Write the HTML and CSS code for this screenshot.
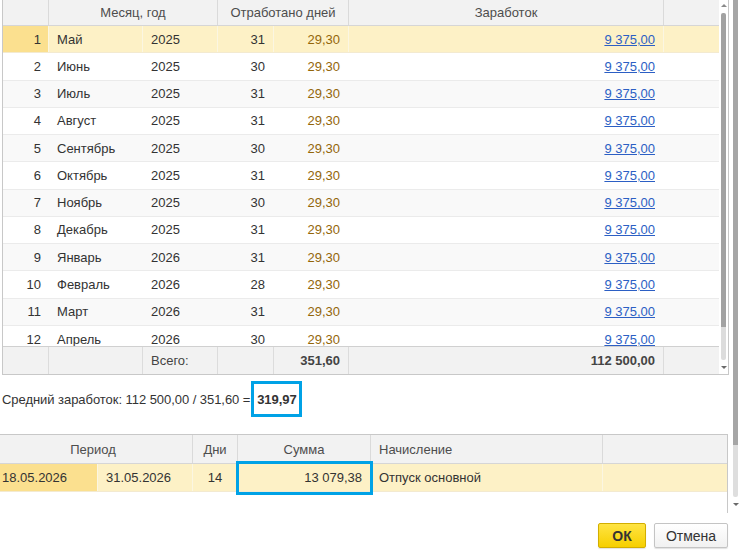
FILE: index.html
```html
<!DOCTYPE html>
<html lang="ru">
<head>
    <meta charset="UTF-8">
    <title>Средний заработок</title>
    <link rel="stylesheet" href="styles.css">
</head>
<body>
    <div class="window">
        <div class="main">
            <!-- Таблица по месяцам -->
            <div class="grid months">
                <div class="grid-area">
                    <div class="row head">
                        <div class="cell"></div>
                        <div class="cell span2 center">Месяц, год</div>
                        <div class="cell span2 center">Отработано дней</div>
                        <div class="cell center">Заработок</div>
                        <div class="cell last"></div>
                    </div>
                    <div class="rows">
                        <div class="row current">
                            <div class="cell num mark">1</div><div class="cell">Май</div><div class="cell">2025</div><div class="cell right">31</div><div class="cell right value">29,30</div><div class="cell right"><a href="#">9 375,00</a></div><div class="cell last"></div>
                        </div>
                        <div class="row">
                            <div class="cell num">2</div><div class="cell">Июнь</div><div class="cell">2025</div><div class="cell right">30</div><div class="cell right value">29,30</div><div class="cell right"><a href="#">9 375,00</a></div><div class="cell last"></div>
                        </div>
                        <div class="row">
                            <div class="cell num">3</div><div class="cell">Июль</div><div class="cell">2025</div><div class="cell right">31</div><div class="cell right value">29,30</div><div class="cell right"><a href="#">9 375,00</a></div><div class="cell last"></div>
                        </div>
                        <div class="row">
                            <div class="cell num">4</div><div class="cell">Август</div><div class="cell">2025</div><div class="cell right">31</div><div class="cell right value">29,30</div><div class="cell right"><a href="#">9 375,00</a></div><div class="cell last"></div>
                        </div>
                        <div class="row">
                            <div class="cell num">5</div><div class="cell">Сентябрь</div><div class="cell">2025</div><div class="cell right">30</div><div class="cell right value">29,30</div><div class="cell right"><a href="#">9 375,00</a></div><div class="cell last"></div>
                        </div>
                        <div class="row">
                            <div class="cell num">6</div><div class="cell">Октябрь</div><div class="cell">2025</div><div class="cell right">31</div><div class="cell right value">29,30</div><div class="cell right"><a href="#">9 375,00</a></div><div class="cell last"></div>
                        </div>
                        <div class="row">
                            <div class="cell num">7</div><div class="cell">Ноябрь</div><div class="cell">2025</div><div class="cell right">30</div><div class="cell right value">29,30</div><div class="cell right"><a href="#">9 375,00</a></div><div class="cell last"></div>
                        </div>
                        <div class="row">
                            <div class="cell num">8</div><div class="cell">Декабрь</div><div class="cell">2025</div><div class="cell right">31</div><div class="cell right value">29,30</div><div class="cell right"><a href="#">9 375,00</a></div><div class="cell last"></div>
                        </div>
                        <div class="row">
                            <div class="cell num">9</div><div class="cell">Январь</div><div class="cell">2026</div><div class="cell right">31</div><div class="cell right value">29,30</div><div class="cell right"><a href="#">9 375,00</a></div><div class="cell last"></div>
                        </div>
                        <div class="row">
                            <div class="cell num">10</div><div class="cell">Февраль</div><div class="cell">2026</div><div class="cell right">28</div><div class="cell right value">29,30</div><div class="cell right"><a href="#">9 375,00</a></div><div class="cell last"></div>
                        </div>
                        <div class="row">
                            <div class="cell num">11</div><div class="cell">Март</div><div class="cell">2026</div><div class="cell right">31</div><div class="cell right value">29,30</div><div class="cell right"><a href="#">9 375,00</a></div><div class="cell last"></div>
                        </div>
                        <div class="row">
                            <div class="cell num">12</div><div class="cell">Апрель</div><div class="cell">2026</div><div class="cell right">30</div><div class="cell right value">29,30</div><div class="cell right"><a href="#">9 375,00</a></div><div class="cell last"></div>
                        </div>
                    </div>
                    <div class="row foot">
                        <div class="cell"></div><div class="cell"></div><div class="cell">Всего:</div><div class="cell"></div><div class="cell right bold">351,60</div><div class="cell right bold">112 500,00</div><div class="cell last"></div>
                    </div>
                </div>
                <div class="vscroll">
                    <div class="arrow up"></div>
                    <div class="thumb"></div>
                    <div class="track"></div>
                    <div class="arrow down"></div>
                </div>
            </div>

            <!-- Расчет -->
            <div class="summary">
                <span>Средний заработок: 112 500,00 / 351,60 =</span>
                <span class="result">319,97</span>
            </div>

            <!-- Таблица начислений -->
            <div class="grid accruals">
                <div class="row head">
                    <div class="cell span2 center">Период</div>
                    <div class="cell center">Дни</div>
                    <div class="cell center">Сумма</div>
                    <div class="cell">Начисление</div>
                    <div class="cell last"></div>
                </div>
                <div class="row current">
                    <div class="cell mark">18.05.2026</div>
                    <div class="cell">31.05.2026</div>
                    <div class="cell center">14</div>
                    <div class="cell right boxed">13 079,38</div>
                    <div class="cell">Отпуск основной</div>
                    <div class="cell last"></div>
                </div>
            </div>

            <div class="buttons">
                <button class="btn btn-ok">ОК</button>
                <button class="btn btn-cancel">Отмена</button>
            </div>
        </div>
        <div class="page-scroll">
            <div class="thumb"></div>
            <div class="track"></div>
            <div class="arrow down"></div>
        </div>
    </div>
</body>
</html>
```

FILE: styles.css
```css
body {
    margin: 0;
    font-family: "Liberation Sans", Arial, sans-serif;
    font-size: 13px;
    color: #333333;
    background-color: #ffffff;
}
.window {
    display: flex;
    width: 741px;
    height: 552px;
    overflow: hidden;
}
.main {
    width: 729px;
    display: flex;
    flex-direction: column;
}

/* таблицы */
.grid {
    display: flex;
    border: 1px solid #c8c8c8;
    background-color: #ffffff;
}
.months {
    margin-left: 2px;
    width: 725px;
    height: 374px;
    border-top: none;
}
.grid-area {
    width: 716px;
    display: flex;
    flex-direction: column;
}
.row {
    display: grid;
    grid-template-columns: 46px 94px 75px 56px 75px 315px 55px;
    box-sizing: border-box;
    height: 27.27px;
    border-bottom: 1px solid #ebebeb;
}
.rows {
    height: 320px;
    overflow: hidden;
}
.rows .row:nth-child(odd) {
    background-color: #f9f9f9;
}
.cell {
    display: flex;
    align-items: center;
    padding: 0 8px;
    border-right: 1px solid transparent;
    white-space: nowrap;
    overflow: hidden;
}
.cell.last {
    border-right: none;
}
.span2 {
    grid-column: span 2;
}
.center {
    justify-content: center;
}
.right {
    justify-content: flex-end;
}
.num {
    justify-content: flex-end;
    padding: 0 7px;
}
.bold {
    font-weight: bold;
}
.value {
    color: #93660a;
}
.cell a {
    color: #2c5fc4;
    text-decoration: underline;
}

.head {
    height: 26px;
    background-color: #f2f2f2;
    border-bottom: 1px solid #d6d6d6;
    color: #4d4d4d;
}
.head .cell {
    border-right-color: #dadada;
}
.head .cell.last {
    border-right: none;
}
.rows .row.current,
.accruals .row.current {
    background-color: #fdf1c6;
    border-bottom-color: #f3ead0;
}
.current .cell {
    border-right-color: #fbf6e2;
}
.current .cell.mark {
    background-color: #fbe08f;
}
.foot {
    height: 28px;
    background-color: #f2f2f2;
    border-top: 1px solid #d0d0d0;
    border-bottom: none;
    color: #444444;
}
.foot .cell {
    border-right-color: #dcdcdc;
}

/* полосы прокрутки */
.vscroll {
    width: 9px;
    display: flex;
    flex-direction: column;
    align-items: center;
}
.vscroll .thumb {
    margin-top: 6px;
    width: 5px;
    height: 314px;
    border-radius: 2px 2px 0 0;
    background-color: #a2a2a2;
}
.vscroll .track {
    width: 5px;
    height: 33px;
    border-radius: 0 0 2px 2px;
    background-color: #dcdcdc;
}
.arrow {
    width: 0;
    height: 0;
    border-left: 3px solid transparent;
    border-right: 3px solid transparent;
}
.arrow.up {
    margin-top: 4px;
    border-bottom: 3px solid #8a8a8a;
}
.arrow.down {
    margin-top: 6px;
    border-top: 3px solid #6a6a6a;
}
.page-scroll {
    margin-left: 4px;
    width: 5px;
    display: flex;
    flex-direction: column;
    align-items: center;
}
.page-scroll .thumb {
    width: 5px;
    height: 445px;
    background-color: #a6a6a6;
}
.page-scroll .track {
    width: 5px;
    height: 52px;
    background-color: #dedede;
    border-radius: 0 0 2px 2px;
}

/* итог */
.summary {
    display: flex;
    align-items: center;
    gap: 1px;
    margin: 6px 0 17px 2px;
    height: 36px;
    letter-spacing: -0.05px;
}
.result {
    display: flex;
    align-items: center;
    justify-content: center;
    box-sizing: border-box;
    width: 51px;
    height: 36px;
    border: 3px solid #00a2e6;
    font-weight: bold;
}

/* начисления */
.accruals {
    flex-direction: column;
    margin-left: -6px;
    width: 733px;
    height: 78px;
    border-left: none;
    border-bottom: none;
}
.accruals .row {
    grid-template-columns: 104px 95px 45px 133px 232px 124px;
}
.accruals .head {
    height: 29px;
}
.accruals .row.current {
    height: 28px;
}
.boxed {
    position: relative;
    overflow: visible;
}
.boxed::after {
    content: "";
    position: absolute;
    top: -3px;
    bottom: -4px;
    left: -2px;
    right: -3px;
    border: 3px solid #00a2e6;
}

/* кнопки */
.buttons {
    display: flex;
    justify-content: flex-end;
    gap: 8px;
    margin-top: 10px;
    padding-right: 1px;
}
.btn {
    height: 25px;
    padding: 0;
    font-family: "Liberation Sans", Arial, sans-serif;
    font-size: 14px;
    color: #333333;
    background: linear-gradient(#ffffff, #f1f1f1);
    border: 1px solid #c4c4c4;
    border-radius: 2px;
    box-shadow: 0 1px 1px rgba(0, 0, 0, 0.12);
    cursor: pointer;
}
.btn-cancel {
    width: 74px;
}
.btn-ok {
    width: 48px;
    font-weight: bold;
    font-size: 14px;
    background: linear-gradient(#ffe443, #f6cf00);
    border-color: #d2ae00;
}
```
